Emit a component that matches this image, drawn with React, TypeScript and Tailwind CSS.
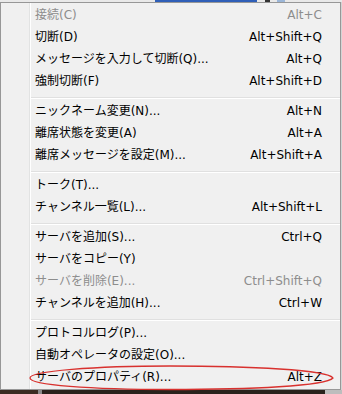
import React from "react";

type Item = { label: string; shortcut?: string; disabled?: boolean } | "sep";

const items: Item[] = [
  { label: "接続(C)", shortcut: "Alt+C", disabled: true },
  { label: "切断(D)", shortcut: "Alt+Shift+Q" },
  { label: "メッセージを入力して切断(Q)...", shortcut: "Alt+Q" },
  { label: "強制切断(F)", shortcut: "Alt+Shift+D" },
  "sep",
  { label: "ニックネーム変更(N)...", shortcut: "Alt+N" },
  { label: "離席状態を変更(A)", shortcut: "Alt+A" },
  { label: "離席メッセージを設定(M)...", shortcut: "Alt+Shift+A" },
  "sep",
  { label: "トーク(T)..." },
  { label: "チャンネル一覧(L)...", shortcut: "Alt+Shift+L" },
  "sep",
  { label: "サーバを追加(S)...", shortcut: "Ctrl+Q" },
  { label: "サーバをコピー(Y)" },
  { label: "サーバを削除(E)...", shortcut: "Ctrl+Shift+Q", disabled: true },
  { label: "チャンネルを追加(H)...", shortcut: "Ctrl+W" },
  "sep",
  { label: "プロトコルログ(P)..." },
  { label: "自動オペレータの設定(O)..." },
  { label: "サーバのプロパティ(R)...", shortcut: "Alt+Z" },
];

export default function App() {
  return (
    <div
      className="relative w-[342px] h-[394px] overflow-hidden bg-[#dcdcdc] text-[12px]"
      style={{ fontFamily: '"DejaVu Sans", "Noto Sans CJK JP", sans-serif' }}
    >
      {/* background window strip at top */}
      <div className="flex h-[2px] bg-[#e9e9e9]">
        <div className="w-[155px]" />
        <div className="w-[102px] bg-[#2f5fb8]" />
        <div className="w-[8px]" />
        <div className="w-[5px] bg-[#333]" />
        <div className="w-[7px]" />
        <div className="w-[8px] bg-[#9bb6d8]" />
      </div>
      <div className="flex">
        <div className="w-[341px] border border-[#979797] bg-[#f0f0f0] relative pt-[1px] pb-[1px]">
          {/* gutter line */}
          <div className="absolute top-0 bottom-0 left-[28px] w-[1px] bg-[#e2e3e3]" />
          <div className="absolute top-0 bottom-0 left-[29px] w-[1px] bg-[#ffffff]" />
          <div className="flex flex-col">
            {items.map((it, i) =>
              it === "sep" ? (
                <div key={i} className="h-[8px] pl-[29px] pt-[5px]">
                  <div className="h-[1px] bg-[#e0e0e0]" />
                  <div className="h-[1px] bg-[#ffffff]" />
                </div>
              ) : (
                <div
                  key={i}
                  className={`h-[22px] flex items-center justify-between pl-[34px] pr-[18px] whitespace-nowrap ${
                    it.disabled ? "text-[#8d8d8d]" : "text-[#000000]"
                  }`}
                >
                  <span>{it.label}</span>
                  <span>{it.shortcut ?? ""}</span>
                </div>
              )
            )}
          </div>
        </div>
        <div className="w-[1px] bg-[#d4d4d4]" />
      </div>
      {/* desktop strip at bottom */}
      <div className="flex h-[6px] bg-[#2a221c]">
        <div className="w-[38px] bg-[#3b2c22]" />
        <div className="w-[4px] bg-[#8a8a8a]" />
        <div className="w-[283px]" />
        <div className="w-[17px] bg-[#bdbdbd]" />
      </div>
      {/* red hand-drawn ellipse */}
      <svg
        className="absolute left-0 top-0 pointer-events-none"
        width="342"
        height="394"
        viewBox="0 0 342 394"
      >
        <path
          d="M 333 378 C 328 370, 250 366, 170 366 C 95 366, 30 371, 30 378 C 30 385, 90 389.5, 170 389.5 C 250 389.5, 326 386, 333 378 Z"
          fill="none"
          stroke="#d8312e"
          strokeWidth="1.3"
        />
      </svg>
    </div>
  );
}
